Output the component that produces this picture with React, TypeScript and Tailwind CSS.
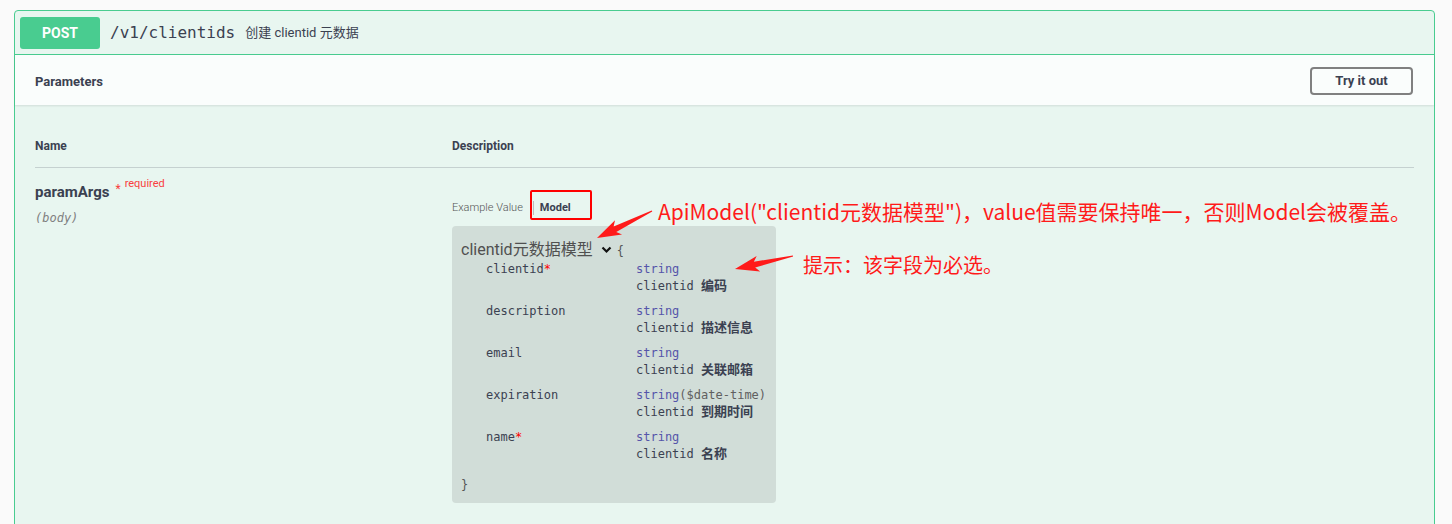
import React from "react"

const sans = "font-['Roboto','Noto_Sans_CJK_SC',sans-serif]"
const mono = "font-['DejaVu_Sans_Mono','Noto_Sans_CJK_SC',monospace]"

const props = [
  { name: "clientid", required: true, type: "string", desc: "编码" },
  { name: "description", required: false, type: "string", desc: "描述信息" },
  { name: "email", required: false, type: "string", desc: "关联邮箱" },
  { name: "expiration", required: false, type: "string($date-time)", desc: "到期时间" },
  { name: "name", required: true, type: "string", desc: "名称" },
]

// red callout arrow, from tail to tip
function arrowPoints(tx: number, ty: number, hx: number, hy: number) {
  const dx = hx - tx
  const dy = hy - ty
  const len = Math.hypot(dx, dy)
  const ux = dx / len
  const uy = dy / len
  const nx = -uy
  const ny = ux
  const headLen = 20
  const headW = 8
  const shaftW = 3
  const bx = hx - ux * headLen
  const by = hy - uy * headLen
  const bbx = hx - ux * (headLen + 4)
  const bby = hy - uy * (headLen + 4)
  const pts = [
    [tx + nx * 0.6, ty + ny * 0.6],
    [bx + nx * shaftW, by + ny * shaftW],
    [bbx + nx * headW, bby + ny * headW],
    [hx, hy],
    [bbx - nx * headW, bby - ny * headW],
    [bx - nx * shaftW, by - ny * shaftW],
    [tx - nx * 0.6, ty - ny * 0.6],
  ]
  return pts.map((p) => p.join(",")).join(" ")
}

export default function App() {
  return (
    <div className={`relative h-screen overflow-hidden bg-[#fafafa] pl-[14px] pt-[10px] text-[#3b4151] ${sans}`}>
      <div className="w-[1421px] rounded-[4px] border border-[#49cc90] bg-[#e8f6f0] pb-[40px]">
        {/* summary bar */}
        <div className="flex h-[44px] items-center border-b border-[#49cc90] px-[5px]">
          <div className="mt-[1px] flex h-[32px] w-[80px] items-center justify-center rounded-[3px] bg-[#49cc90] text-[14px] font-bold text-white">
            POST
          </div>
          <span className={`ml-[10px] text-[16px] text-[#3b4151] ${mono}`}>/v1/clientids</span>
          <span className="ml-[10px] text-[13px] text-[#3b4151]">创建 clientid 元数据</span>
        </div>

        {/* section header */}
        <div className="flex h-[50px] items-center justify-between bg-white/80 px-[20px] shadow-[0_1px_2px_rgba(0,0,0,0.1)]">
          <h4 className="mt-[3px] text-[13px] font-bold">Parameters</h4>
          <button className="mr-[1px] mt-[1px] h-[28px] w-[103px] rounded-[4px] border-2 border-[#808080] text-[13px] font-bold text-[#3b4151]">
            Try it out
          </button>
        </div>

        {/* parameters table */}
        <div className="px-[20px] pt-[20px]">
          <div className="flex border-b border-[#3b4151]/20 py-[12px] text-[12px] font-bold">
            <div className="w-[417px]">Name</div>
            <div>Description</div>
          </div>

          <div className="flex pt-[14px]">
            <div className="w-[417px]">
              <div className="flex items-start">
                <span className="text-[15px] font-bold leading-[20px]">paramArgs</span>
                <span className="ml-[6px] mt-[-2px] text-[12px] text-[#f93e3e]">*</span>
                <span className="ml-[4px] mt-[-6px] text-[11px] text-[#f93e3e]">required</span>
              </div>
              <div className={`mt-[7px] text-[12px] italic text-[#808080] ${mono}`}>(body)</div>
            </div>

            <div>
              <div className="mt-[18px] flex items-center text-[11px]">
                <span className="font-light text-[#555]">Example Value</span>
                <span className="ml-[10px] h-[14px] border-l border-[#bbb]" />
                <span className="ml-[6px] font-bold">Model</span>
              </div>

              <div className="mt-[9px] w-[324px] rounded-[4px] bg-[#d1ddd8] pb-[10px] pl-[9px] pt-[14px]">
                <div className="flex items-center">
                  <span className="text-[16px] leading-[20px] text-[#505050]">clientid元数据模型</span>
                  <svg className="ml-[8px]" width="11" height="8" viewBox="0 0 11 8">
                    <path d="M1.5 1.5 L5.5 5.5 L9.5 1.5" fill="none" stroke="#111" strokeWidth="2.2" />
                  </svg>
                  <span className={`ml-[5px] mt-[2px] text-[12px] text-[#555] ${mono}`}>{"{"}</span>
                </div>
                <div className={`mt-[2px] text-[12px] leading-[15px] ${mono}`}>
                  {props.map((p) => (
                    <div key={p.name} className="flex h-[42px]">
                      <div className="w-[175px] pl-[25px]">
                        {p.name}
                        {p.required && <span className="text-[#f00]">*</span>}
                      </div>
                      <div>
                        <div className="text-[#55a]">
                          {p.type === "string" ? (
                            "string"
                          ) : (
                            <>
                              string<span className="text-[#606060]">($date-time)</span>
                            </>
                          )}
                        </div>
                        <div className="leading-[15px]">
                          clientid <span className="font-['Noto_Sans_CJK_SC'] text-[13px] font-bold leading-[15px]">{p.desc}</span>
                        </div>
                      </div>
                    </div>
                  ))}
                  <div className="pt-[6px] text-[#555]">{"}"}</div>
                </div>
              </div>
            </div>
          </div>
        </div>
      </div>

      {/* annotations */}
      <div className="absolute left-[530px] top-[190px] h-[30px] w-[62px] rounded-[2px] border-2 border-[#f00]" />
      <div className="absolute left-[658px] top-[197px] font-['Noto_Sans_CJK_SC',sans-serif] text-[21px] leading-[28px] text-[#ff1a1a]">
        ApiModel("clientid元数据模型")，value值需要保持唯一，否则Model会被覆盖。
      </div>
      <div className="absolute left-[803px] top-[251px] font-['Noto_Sans_CJK_SC',sans-serif] text-[20px] leading-[28px] text-[#ff1a1a]">
        提示：该字段为必选。
      </div>
      <svg className="pointer-events-none absolute left-0 top-0" width="1452" height="524">
        <polygon points={arrowPoints(652, 211, 597, 238)} fill="#ff1a1a" />
        <polygon points={arrowPoints(793, 256, 735, 269)} fill="#ff1a1a" />
      </svg>
    </div>
  )
}
